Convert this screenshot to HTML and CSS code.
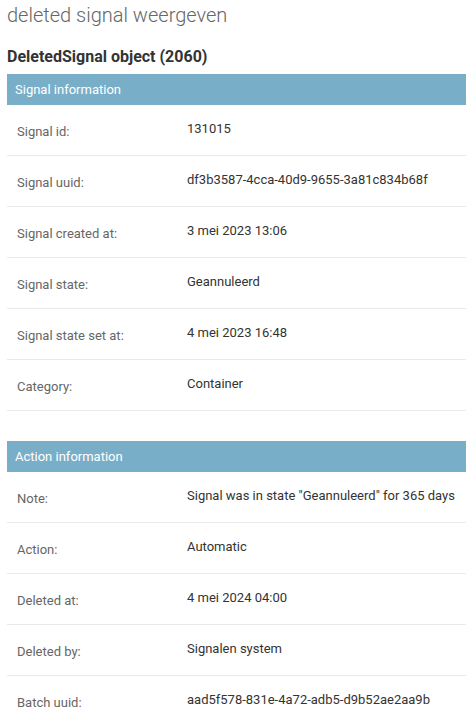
FILE: index.html
```html
<!DOCTYPE html>
<html lang="nl">
<head>
<meta charset="utf-8">
<title>deleted signal weergeven</title>
<link rel="stylesheet" href="styles.css">
</head>
<body>
<div class="content">
  <h1 class="page-title">deleted signal weergeven</h1>
  <h2 class="object-title">DeletedSignal object (2060)</h2>

  <section class="fieldset">
    <h3 class="fieldset-header">Signal information</h3>
    <div class="row"><div class="label">Signal id:</div><div class="value">131015</div></div>
    <div class="row"><div class="label">Signal uuid:</div><div class="value">df3b3587-4cca-40d9-9655-3a81c834b68f</div></div>
    <div class="row"><div class="label">Signal created at:</div><div class="value">3 mei 2023 13:06</div></div>
    <div class="row"><div class="label">Signal state:</div><div class="value">Geannuleerd</div></div>
    <div class="row"><div class="label">Signal state set at:</div><div class="value">4 mei 2023 16:48</div></div>
    <div class="row"><div class="label">Category:</div><div class="value">Container</div></div>
  </section>

  <section class="fieldset">
    <h3 class="fieldset-header">Action information</h3>
    <div class="row"><div class="label">Note:</div><div class="value">Signal was in state "Geannuleerd" for 365 days</div></div>
    <div class="row"><div class="label">Action:</div><div class="value">Automatic</div></div>
    <div class="row"><div class="label">Deleted at:</div><div class="value">4 mei 2024 04:00</div></div>
    <div class="row"><div class="label">Deleted by:</div><div class="value">Signalen system</div></div>
    <div class="row"><div class="label">Batch uuid:</div><div class="value">aad5f578-831e-4a72-adb5-d9b52ae2aa9b</div></div>
  </section>
</div>
</body>
</html>
```

FILE: styles.css
```css
html, body {
  margin: 0;
  padding: 0;
  background: #fff;
}

body {
  font-family: Roboto, "Liberation Sans", sans-serif;
  font-size: 13px;
  color: #333;
}

.content {
  padding: 3px 0 0 7px;
}

.page-title {
  margin: 0 0 20px;
  font-size: 20px;
  line-height: 24px;
  font-weight: 300;
  color: #666;
}

.object-title {
  margin: 0 0 7px;
  font-size: 16px;
  line-height: 20px;
  font-weight: 700;
  color: #333;
}

.fieldset {
  margin: 0 0 30px;
}

.fieldset-header {
  margin: 0;
  padding: 8px;
  background: #79aec8;
  color: #fff;
  font-size: 13px;
  font-weight: 400;
  line-height: 15px;
}

.row {
  display: flex;
  align-items: flex-start;
  padding: 16px 10px;
  border-bottom: 1px solid #eaeaea;
  line-height: 15px;
}

.label {
  width: 160px;
  min-width: 160px;
  padding: 3px 10px 0 0;
  color: #666;
}

.value {
  color: #333;
  white-space: nowrap;
}
```
